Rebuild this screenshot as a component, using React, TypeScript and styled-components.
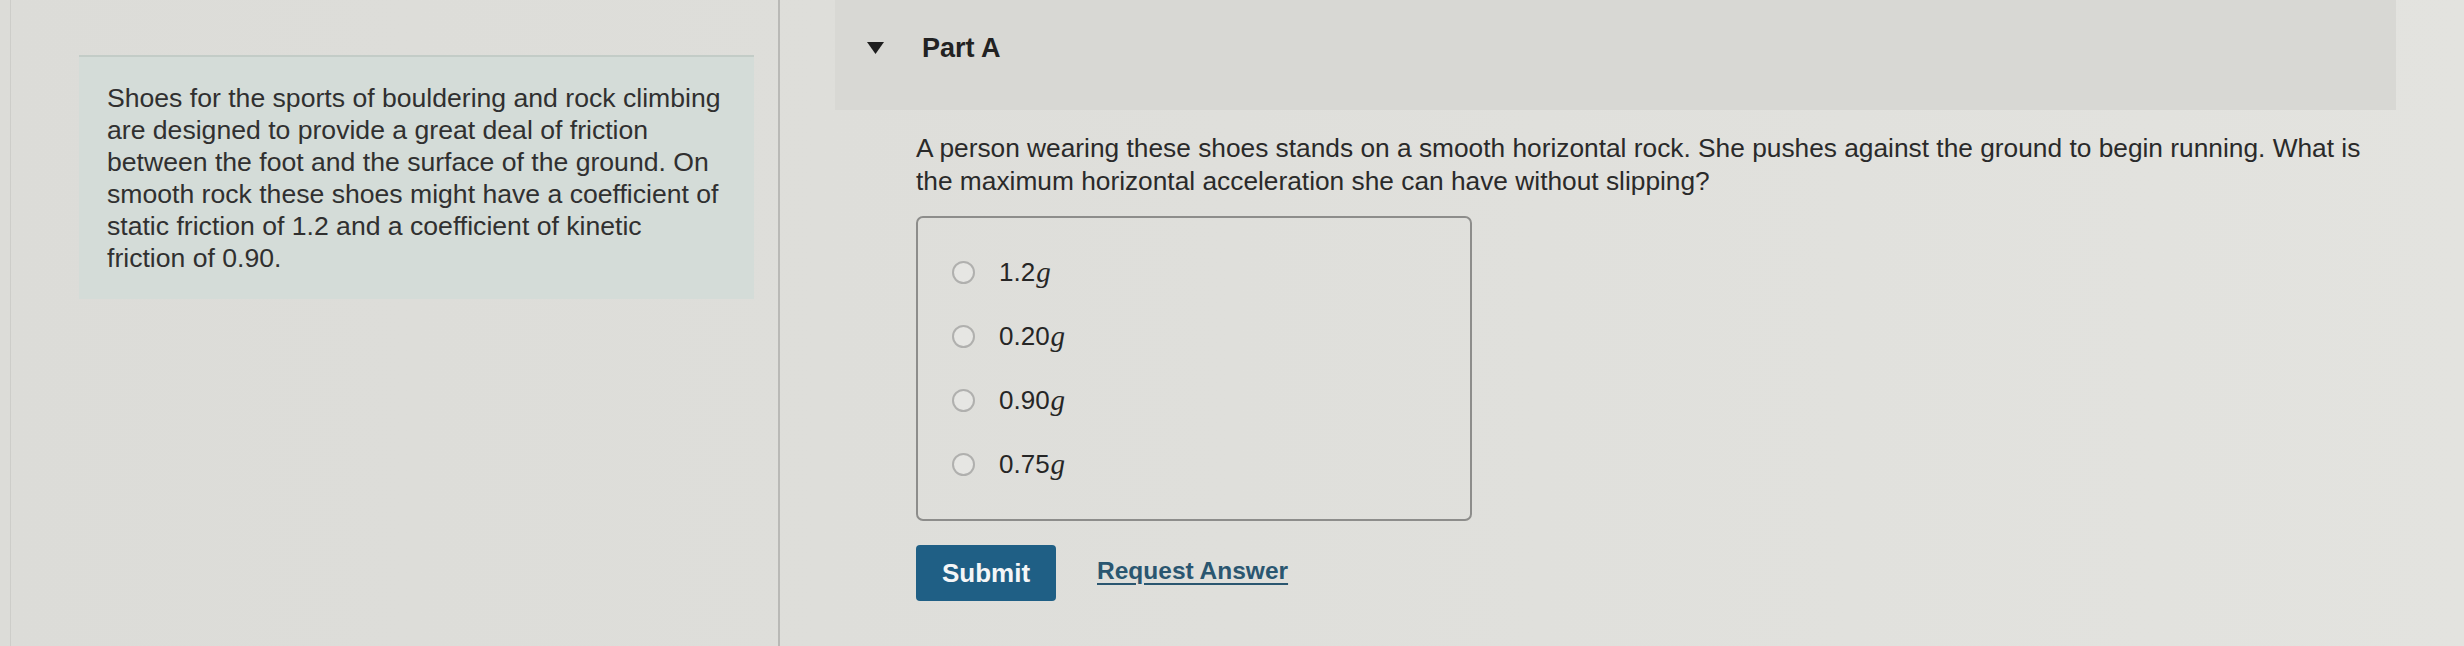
import React from "react";
import styled, { createGlobalStyle } from "styled-components";

const Global = createGlobalStyle`
  html, body { margin: 0; padding: 0; }
  body {
    background: #dfdfdb;
    font-family: "Liberation Sans", Arial, sans-serif;
    color: #2b2b2b;
  }
`;

const Page = styled.div`
  display: flex;
  width: 2464px;
  height: 646px;
  background: linear-gradient(90deg, #dcdcd8 0%, #dfdfdb 50%, #e3e3df 100%);
  overflow: hidden;
`;

const Sidebar = styled.aside`
  box-sizing: border-box;
  width: 780px;
  flex: none;
  padding: 55px 24px 0 79px;
  border-right: 2px solid #b9b9b6;
  position: relative;
`;

const GutterLine = styled.div`
  position: absolute;
  left: 10px;
  top: 0;
  bottom: 0;
  width: 1px;
  background: #cdcdc9;
`;

const InfoPanel = styled.div`
  box-sizing: border-box;
  width: 675px;
  height: 244px;
  padding: 25px 10px 0 28px;
  background: #d4dcd8;
  border-top: 2px solid #c3ccc7;
  font-size: 26.6px;
  line-height: 32px;
  color: #303030;
  white-space: nowrap;
`;

const Main = styled.main`
  flex: 1;
  padding: 0 68px 0 55px;
`;

const PartHeader = styled.div`
  display: flex;
  align-items: center;
  height: 110px;
  padding: 0 0 14px 32px;
  box-sizing: border-box;
  background: #d8d8d4;
`;

const Caret = styled.svg`
  width: 17px;
  height: 12px;
  flex: none;
  margin-right: 38px;
`;

const PartTitle = styled.h2`
  margin: 0;
  font-size: 27px;
  font-weight: 700;
  color: #222;
`;

const Body = styled.div`
  padding: 22px 0 0 81px;
`;

const Question = styled.p`
  margin: 0;
  max-width: 1480px;
  font-size: 26.3px;
  line-height: 33px;
  color: #2a2a2a;
`;

const Choices = styled.div`
  box-sizing: border-box;
  width: 556px;
  height: 305px;
  margin-top: 18px;
  padding: 22px 0 0 34px;
  border: 2px solid #8d8d8b;
  border-radius: 7px;
  display: flex;
  flex-direction: column;
`;

const Choice = styled.label`
  display: flex;
  align-items: center;
  height: 64px;
  font-size: 26px;
  color: #262626;
`;

const Radio = styled.span`
  box-sizing: border-box;
  width: 23px;
  height: 23px;
  flex: none;
  border-radius: 50%;
  border: 2px solid #b0b0ae;
  background: #e6e6e3;
  margin-right: 24px;
`;

const Var = styled.i`
  font-family: "Liberation Serif", "Times New Roman", serif;
  font-size: 29px;
  margin-left: 1px;
`;

const Actions = styled.div`
  display: flex;
  align-items: center;
  gap: 41px;
  margin-top: 24px;
`;

const SubmitButton = styled.button`
  width: 140px;
  height: 56px;
  border: none;
  border-radius: 4px;
  background: #1f5f85;
  color: #f4f6f7;
  font-family: "Liberation Sans", Arial, sans-serif;
  font-size: 26px;
  font-weight: 700;
  padding: 0;
`;

const RequestLink = styled.a`
  font-size: 24.5px;
  font-weight: 700;
  color: #2a5670;
  text-decoration: underline;
  text-underline-offset: 4px;
  text-decoration-thickness: 2px;
  margin-top: -4px;
`;

const options = ["1.2", "0.20", "0.90", "0.75"];

const infoLines = [
  "Shoes for the sports of bouldering and rock climbing",
  "are designed to provide a great deal of friction",
  "between the foot and the surface of the ground. On",
  "smooth rock these shoes might have a coefficient of",
  "static friction of 1.2 and a coefficient of kinetic",
  "friction of 0.90.",
];

export default function App() {
  return (
    <>
      <Global />
      <Page>
        <Sidebar>
          <GutterLine />
          <InfoPanel>
            {infoLines.map((l, i) => (
              <React.Fragment key={i}>
                {l}
                {i < infoLines.length - 1 && <br />}
              </React.Fragment>
            ))}
          </InfoPanel>
        </Sidebar>
        <Main>
          <PartHeader>
            <Caret viewBox="0 0 17 12">
              <polygon points="0,0 17,0 8.5,12" fill="#1e1e1e" />
            </Caret>
            <PartTitle>Part A</PartTitle>
          </PartHeader>
          <Body>
            <Question>
              A person wearing these shoes stands on a smooth horizontal rock. She
              pushes against the ground to begin running. What is the maximum
              horizontal acceleration she can have without slipping?
            </Question>
            <Choices>
              {options.map((o) => (
                <Choice key={o}>
                  <Radio />
                  {o}
                  <Var>g</Var>
                </Choice>
              ))}
            </Choices>
            <Actions>
              <SubmitButton>Submit</SubmitButton>
              <RequestLink href="#">Request Answer</RequestLink>
            </Actions>
          </Body>
        </Main>
      </Page>
    </>
  );
}
